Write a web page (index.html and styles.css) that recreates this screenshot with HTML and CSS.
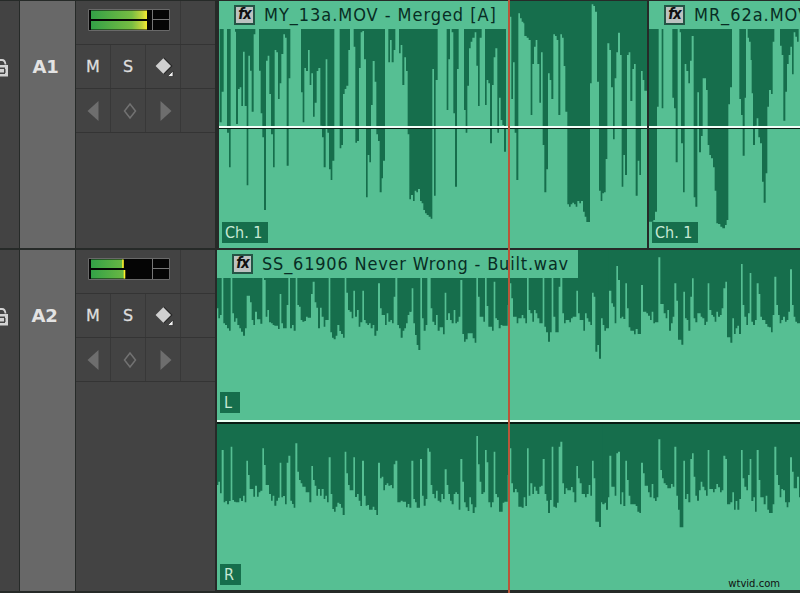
FILE: index.html
```
<!DOCTYPE html>
<html lang="en">
<head>
    <meta charset="UTF-8">
    <meta name="viewport" content="width=device-width, initial-scale=1.0">
    <title>Timeline - Audio Tracks</title>
    <link rel="stylesheet" href="styles.css">
</head>
<body>
    <!-- shared icons -->
    <svg class="symbols" width="0" height="0">
        <linearGradient id="level" gradientUnits="userSpaceOnUse" x1="2" y1="0" x2="60" y2="0">
            <stop offset="0" stop-color="#31a047"/>
            <stop offset="0.72" stop-color="#77bd42"/>
            <stop offset="0.9" stop-color="#c2d43c"/>
            <stop offset="1" stop-color="#fff12b"/>
        </linearGradient>
        <symbol id="lock" viewBox="0 0 9 20">
            <path d="M-1 2H2Q5 2 5.500 6.500" fill="none" stroke="#d2d2d2" stroke-width="1.8"/>
            <path d="M-3 7H8V18.500H-3Z" fill="#d2d2d2"/>
            <path d="M-1 9.500H5V11H-1ZM-1 14.500H5V16H-1ZM4 11H5.500V15H4Z" fill="#454545"/>
        </symbol>
        <symbol id="keyframe" viewBox="0 0 20 22">
            <path d="M10 1.500L18.500 10L10 18.500Z" fill="#252525"/>
            <path d="M9.300 2.300L17 10L9.300 17.700L1.600 10Z" fill="#d0d0d0"/>
            <path d="M19 15V20.500H13.500Z" fill="#eee" stroke="#282828" stroke-width="0.7"/>
        </symbol>
        <symbol id="prev" viewBox="0 0 12 20"><path d="M11.500 0V20L0.500 10Z" fill="#6e6e6e"/></symbol>
        <symbol id="next" viewBox="0 0 12 20"><path d="M0.500 0V20L11.500 10Z" fill="#6e6e6e"/></symbol>
        <symbol id="diamond" viewBox="0 0 14 18"><path d="M7 2L12.500 9L7 16L1.500 9Z" fill="none" stroke="#727272" stroke-width="1.5"/></symbol>
    </svg>

    <div class="timeline">
        <div class="track track-a1">
            <div class="lock"><svg width="9" height="20"><use href="#lock"/></svg></div>
            <div class="target">A1</div>
            <div class="controls">
                <div class="meter-row">
                    <div class="meter-cell">
                        <svg width="82" height="22" viewBox="0 0 82 22">
                            <path d="M0.500 0.500H81.500V21.500H0.500Z" fill="#050505" stroke="#696969"/>
                            <path d="M3 1.500H59V10H3ZM3 12H59V20.500H3Z" fill="url(#level)"/>
                            <path d="M64.500 1V21M64.500 10.500H81" stroke="#777" fill="none"/>
                        </svg>
                    </div>
                    <div class="cell"></div>
                </div>
                <div class="button-row">
                    <div class="cell letter">M</div>
                    <div class="cell letter">S</div>
                    <div class="cell shift-small"><svg width="20" height="22"><use href="#keyframe"/></svg></div>
                    <div class="cell"></div>
                </div>
                <div class="button-row">
                    <div class="cell"><svg width="12" height="20"><use href="#prev"/></svg></div>
                    <div class="cell shift-medium"><svg width="14" height="18"><use href="#diamond"/></svg></div>
                    <div class="cell shift-large"><svg width="12" height="20"><use href="#next"/></svg></div>
                    <div class="cell"></div>
                </div>
            </div>
            <div class="lane">
                <div class="clip clip-my">
                    <svg class="wave" viewBox="12 3 1284 741" preserveAspectRatio="none">
                        <path d="M14 87V367H20V275H26V87H36V398H42V502H47V87H60V95H63V372H69V267H74V262H79V318H84V155H89V318H95V556H100V167H105V212H110V335H116V103H121V87H132V212H137V340H142V412H147V630H153V182H158V167H163V282H168V403H174V502H179V150H184V157H189V297H194V250H199V162H205V103H210V113H215V497H221V235H226V87H258V277H263V367H268V204H273V213H279V150H284V255H289V220H294V350H299V308H305V213H310V204H316V377H321V412H326V502H332V178H337V398H342V508H347V540H352V482H358V87H374V445H379V435H384V282H389V267H394V257H400V150H405V87H416V140H421V428H426V423H432V204H437V97H442V93H447V178H453V592H458V465H463V487H468V315H473V183H479V245H484V403H489V423H494V577H500V535H504V482H510V87Z"/>
                        <path transform="translate(450)" d="M70 87V187H75V120H80V187H86V150H91V87H102V160H107V135H112V255H118V172H123V213H128V403H133V598H138V585H144V603H149V572H154V577H159V567H165V603H170V610H175V630H180V640H185V645H191V650H197V656H202V207H207V587H212V240H218V87H245V330H250V178H255V87H260V97H265V340H270V560H276V207H281V87H297V330H302V398H307V257H312V145H317V125H322V113H329V97H334V197H339V318H344V113H350V87H360V315H365V240H370V250H375V430H381V255H386V172H391V145H397V398H402V293H407V360H412V375H417V455H423V87Z"/>
                        <path transform="translate(870)" d="M12 3V50H19V297H24V187H29V398H34V540H40V40H45V55H50V65H55V70H58V108H65V113H71V120H77V345H82V192H87V140H92V120H97V192H103V308H108V157H113V435H118V577H124V508H129V220H134V240H139V297H145V103H150V108H155V120H160V345H166V103H171V113H176V198H181V335H187V613H192V620H197V613H202V608H207V613H212V620H217V603H223V610H228V603H234V635H239V650H244V666H255V250H260V13H265V18H270V35H276V245H282V572H287V603H292V580H297V577H302V477H307V130H313V150H318V262H324V418H329V235H334V157H339V98H345V165H350V560H355V465H360V525H366V165H371V157H376V303H382V207H387V192H392V587H398V482H403V525H408V213H413V240H418V272H426V3Z"/>
                    </svg>
                    <div class="clip-name"><span class="fx">fx</span><span class="name">MY_13a.MOV - Merged [A]</span></div>
                    <div class="channel">Ch. 1</div>
                    <div class="volume"></div>
                </div>
                <div class="clip clip-mr">
                    <svg class="wave" viewBox="12 3 453 741" preserveAspectRatio="none">
                        <path d="M12 87V665H25V660H30V635H36V320H41V87H50V325H55V87H82V293H87V325H92V487H98V87H104V97H108V430H114V577H119V192H124V213H130V250H135V182H140V108H146V592H151V620H157V277H162V457H168V408H173V235H183V270H188V435H193V465H198V475H204V502H209V572H214V670H219V672H226V680H232V685H240V675H245V660H250V313H255V262H261V87H283V297H288V345H293V467H299V293H303V87H308V113H312V125H317V180H320V280H324V435H330V377H335V355H340V412H345V430H351V545H356V608H362V520H367V320H372V270H378V282H383V125H388V87H405V137H410V165H415V362H421V275H426V192H431V165H436V140H441V223H446V97H451V110H456V125H461V87Z"/>
                    </svg>
                    <div class="clip-name"><span class="fx">fx</span><span class="name">MR_62a.MOV</span></div>
                    <div class="channel">Ch. 1</div>
                    <div class="volume"></div>
                </div>
            </div>
        </div>

        <div class="track track-a2">
            <div class="lock"><svg width="9" height="20"><use href="#lock"/></svg></div>
            <div class="target target-a2">A2</div>
            <div class="controls">
                <div class="meter-row">
                    <div class="meter-cell">
                        <svg width="82" height="22" viewBox="0 0 82 22">
                            <path d="M0.500 0.500H81.500V21.500H0.500Z" fill="#050505" stroke="#696969"/>
                            <path d="M3 1.500H35V10H3ZM3 12H37V20.500H3Z" fill="url(#level)"/>
                            <path d="M35 1.500V10M36.500 12V20.500" stroke="#fff12b" stroke-width="1.600"/>
                            <path d="M64.500 1V21M64.500 10.500H81" stroke="#777" fill="none"/>
                        </svg>
                    </div>
                    <div class="cell"></div>
                </div>
                <div class="button-row">
                    <div class="cell letter">M</div>
                    <div class="cell letter">S</div>
                    <div class="cell shift-small"><svg width="20" height="22"><use href="#keyframe"/></svg></div>
                    <div class="cell"></div>
                </div>
                <div class="button-row">
                    <div class="cell"><svg width="12" height="20"><use href="#prev"/></svg></div>
                    <div class="cell shift-medium"><svg width="14" height="18"><use href="#diamond"/></svg></div>
                    <div class="cell shift-large"><svg width="12" height="20"><use href="#next"/></svg></div>
                    <div class="cell"></div>
                </div>
            </div>
            <div class="lane lane-a2">
                <div class="half half-left">
                    <svg class="wave" viewBox="6 15 1749 510" preserveAspectRatio="none">
                        <path d="M5 98V190H10V220H15V210H20V98H25V235H30V240H36V250H42V257H47V98H52V205H57V230H62V220H67V240H73V250H78V260H84V272H90V250H95V152H105V172H110V225H115V240H120V200H126V223H136V236H142V98H147V105H152V215H157V195H162V232H168V235H173V240H178V242H189V252H194V147H199V235H204V250H215V180H220V98H225V250H231V240H236V257H242V98H247V180H252V185H257V225H262V230H268V228H273V215H278V218H288V147H293V110H299V172H304V188H309V250H315V188H320V215H326V245H331V225H341V98H346V262H351V278H356V283H362V272H367V240H373V258H378V267H384V278H389V98H394V143H399V195H404V200H410V220H415V137H420V215H426V195H431V245H436V232H442V137H447V225H452V235H457V240H462V235H467V250H473V240H478V272H484V257H489V115H495V190H500V210H510V240H515V205H520V230H526V225H531V235H536V155H541V98H547V240H552V250H557V278H563V257H568V250H573V235H578V210H583V200H588V98Z"/>
                        <path transform="translate(585)" d="M0 98V200H5V130H10V235H15V270H20V300H25V315H31V98H36V220H41V257H47V240H52V98H62V190H67V230H73V240H78V210H83V257H89V247H99V268H104V143H109V225H114V205H120V225H125V235H131V195H136V235H141V230H146V215H151V105H157V267H162V290H167V283H173V265H188V280H194V293H199V98H204V155H209V215H220V230H225V98H230V183H235V245H246V257H251V110H256V220H261V225H266V250H272V240H277V242H293V180H299V115H304V160H309V215H320V235H325V220H335V210H340V220H346V235H351V98H356V195H361V205H367V230H372V195H377V205H382V220H388V235H398V98H403V245H408V262H414V290H420V262H425V98H430V215H436V262H446V125H451V98H457V205H462V235H467V225H478V232H483V220H488V215H499V137H504V205H509V225H520V257H525V205H530V220H535V230H541V240H546V143H551V155H556V320H562V300H567V341H573V220H578V240H583V257H588V250H597V15H502V98Z"/>
                        <path transform="translate(1155)" d="M26 15V137H34V175H39V185H44V235H49V63H54V105H60V220H65V215H70V222H76V115H81V190H86V247H91V257H102V268H107V252H113V267H123V120H129V200H139V205H144V212H150V225H155V200H160V235H165V232H175V37H181V177H191V205H197V220H202V195H207V257H213V235H218V215H223V115H229V167H234V284H244V299H250V140H255V220H260V225H265V257H271V155H276V100H281V220H286V232H292V205H302V215H307V220H313V240H318V230H323V115H328V195H334V210H339V215H344V230H349V200H354V215H360V210H365V190H370V130H376V110H381V277H391V293H397V220H402V267H407V250H412V242H417V267H423V57H428V180H433V215H439V240H444V205H449V84H454V230H459V240H465V225H470V115H476V147H481V215H486V225H496V237H502V245H507V247H513V262H518V210H523V95H529V180H534V210H539V235H544V225H549V215H555V230H560V225H565V200H570V73H576V180H581V215H586V230H591V235H602V15Z"/>
                    </svg>
                    <div class="clip-name"><span class="fx">fx</span><span class="name">SS_61906 Never Wrong - Built.wav</span></div>
                    <div class="channel channel-left">L</div>
                </div>
                <div class="half half-right">
                    <svg class="wave" viewBox="6 27 1749 498" preserveAspectRatio="none">
                        <path d="M5 27V210H10V200H15V235H20V105H26V262H31V258H36V268H42V258H47V95H52V255H57V260H62V262H73V250H78V258H84V242H89V262H94V137H99V180H104V222H115V245H120V212H126V245H131V232H136V227H142V100H147V150H152V210H162V237H168V257H173V242H178V272H184V257H189V248H194V143H199V247H204V243H210V268H215V143H220V122H226V257H231V267H236V278H241V85H247V170H252V195H257V205H262V215H272V232H283V262H289V153H294V195H299V212H304V242H309V222H315V242H320V222H326V252H331V242H336V262H341V127H347V237H352V282H357V290H362V275H367V263H373V267H378V278H383V300H389V110H394V175H399V210H404V226H415V127H420V246H426V237H431V257H436V273H441V137H447V242H452V272H457V270H462V284H473V275H478V285H484V300H489V143H495V190H500V185H505V226H510V210H515V205H520V212H526V210H531V220H536V148H541V137H547V262H557V257H563V260H573V277H578V267H583V278H589V27Z"/>
                        <path transform="translate(585)" d="M3 27V137H10V252H15V262H20V278H30V132H36V242H41V272H47V252H52V100H57V110H62V210H67V237H73V250H78V227H83V257H89V262H94V237H99V252H104V163H110V210H115V237H120V257H125V268H131V237H136V232H141V237H146V284H151V132H157V200H162V262H167V277H173V288H178V247H183V268H188V294H194V277H199V63H204V148H209V200H214V237H220V232H225V105H230V142H235V262H241V277H246V262H251V110H256V237H261V247H267V290H278V263H283V260H293V180H299V100H304V205H309V232H315V222H320V232H325V275H335V278H341V247H346V273H351V100H356V242H361V205H367V237H372V215H377V227H382V237H388V215H393V212H398V132H404V237H409V257H414V294H420V255H425V95H430V275H436V278H441V263H446V95H451V80H457V205H462V237H467V220H472V226H483V216H488V232H493V262H499V153H504V190H509V205H515V237H525V247H530V237H536V210H541V242H546V137H551V190H556V320H567V336H573V262H578V268H583V263H588V283H593V27Z"/>
                        <path transform="translate(1155)" d="M22 27V247H28V122H34V215H44V242H49V115H54V110H60V268H65V232H70V273H76V137H81V195H86V242H91V268H107V273H112V290H118V294H123V143H129V175H134V212H144V232H149V247H155V207H160V250H165V258H170V247H175V73H181V165H186V190H191V205H197V210H202V220H213V207H218V215H223V95H229V242H234V284H239V337H250V137H255V252H260V237H265V262H271V132H276V115H281V185H286V242H291V257H297V226H302V200H307V215H313V226H318V242H323V105H328V222H339V232H344V222H349V207H354V217H360V232H365V226H370V122H376V132H381V268H391V262H397V232H402V284H407V258H412V284H418V252H423V105H428V190H433V215H439V226H444V180H449V132H454V258H460V247H465V290H470V105H476V195H481V247H491V268H497V242H502V284H507V294H518V268H523V95H529V180H534V210H539V247H544V222H549V226H555V262H560V277H565V262H570V127H576V170H581V220H591V185H597V247H602V27Z"/>
                        <path transform="translate(1155)" d="M7 27V267H13V262H18V284H24V27Z"/>
                    </svg>
                    <div class="channel channel-right">R</div>
                </div>
            </div>
        </div>
        <div class="playhead"></div>
        <div class="watermark">wtvid.com</div>
    </div>
</body>
</html>
```
FILE: styles.css
```
body {
    margin: 0;
    background-color: #262a28;
    font-family: "DejaVu Sans Condensed", "DejaVu Sans", sans-serif;
    overflow: hidden;
}
.symbols {
    display: block;
}
.timeline {
    position: relative;
    width: 800px;
    height: 593px;
    overflow: hidden;
}
.track {
    display: grid;
    grid-template-columns: 19px 55px 139px 584px;
    column-gap: 1px;
}
.track-a1 {
    height: 247px;
    padding-top: 1px;
}
.track-a2 {
    height: 341px;
    margin-top: 2px;
}
.lock,
.controls {
    background-color: #434343;
}
.lock svg {
    display: block;
    margin-top: 57px;
}
.target {
    background-color: #686868;
    color: #e3e3e3;
    font-family: "DejaVu Sans", sans-serif;
    font-size: 18px;
    font-weight: bold;
    line-height: 20px;
    letter-spacing: -0.3px;
    text-align: center;
    padding-top: 56px;
    padding-right: 4px;
}
.target-a2 {
    padding-right: 6px;
}
.meter-row {
    display: flex;
    height: 43px;
    border-bottom: 1px solid #343434;
}
.meter-cell {
    width: 92px;
    padding: 8px 0 0 12px;
    border-right: 1px solid #383838;
}
.meter-cell svg {
    display: block;
}
.button-row {
    display: grid;
    grid-template-columns: 35px 35px 35px 34px;
    height: 43px;
    border-bottom: 1px solid #343434;
}
.cell {
    display: flex;
    align-items: center;
    justify-content: center;
    border-right: 1px solid #383838;
}
.cell:last-child {
    border-right: none;
}
.shift-small {
    padding-left: 2px;
}
.shift-medium {
    padding-left: 4px;
}
.shift-large {
    padding-left: 6px;
}
.letter {
    color: #dedede;
    font-family: "DejaVu Sans", sans-serif;
    font-size: 16px;
    -webkit-text-stroke: 0.3px #dedede;
}
.lane {
    display: flex;
    gap: 2px;
    padding-left: 3px;
    overflow: hidden;
}
.lane-a2 {
    display: block;
    padding-left: 1px;
}
.clip,
.half {
    display: grid;
    grid-template-columns: 100%;
    grid-template-rows: 100%;
    background-color: #56bf93;
    overflow: hidden;
}
.clip > *,
.half > * {
    grid-area: 1 / 1;
}
.clip {
    height: 247px;
}
.clip-my {
    width: 428px;
}
.clip-mr {
    width: 151px;
}
.half-left {
    height: 170px;
    border-bottom: 2px solid #e9fff2;
}
.half-right {
    height: 166px;
    border-top: 2px solid #071b12;
}
.wave {
    display: block;
    width: 100%;
    height: 100%;
    fill: #166e4c;
}
.clip-name {
    box-sizing: border-box;
    align-self: start;
    display: flex;
    align-items: center;
    height: 28px;
    padding-left: 15px;
    padding-bottom: 1px;
    background-color: #56bf93;
    color: #082d24;
    font-size: 18px;
    letter-spacing: 0.95px;
    white-space: nowrap;
}
.clip-my .clip-name {
    width: 290px;
}
.half .clip-name {
    width: 361px;
    letter-spacing: 0.8px;
}
.fx {
    box-sizing: border-box;
    flex: none;
    width: 21px;
    height: 20px;
    margin-right: 9px;
    border: 2px solid #245445;
    background-color: #bcc2c0;
    color: #111;
    font-size: 15px;
    font-style: italic;
    font-weight: bold;
    letter-spacing: -1px;
    line-height: 14px;
    text-align: center;
}
.channel {
    justify-self: start;
    align-self: end;
    box-sizing: border-box;
    width: 46px;
    height: 21px;
    margin-left: 3px;
    margin-bottom: 5px;
    padding-left: 3px;
    background-color: #166e4c;
    color: #c7e9d3;
    font-size: 16px;
    line-height: 22px;
    white-space: nowrap;
}
.channel-left {
    width: 20px;
    margin-bottom: 7px;
    padding-left: 4px;
}
.channel-right {
    width: 21px;
    padding-left: 4px;
}
.volume {
    align-self: start;
    height: 2px;
    margin-top: 125px;
    background-color: #f2fff8;
    border-bottom: 1px solid #071b12;
}
.playhead {
    position: absolute;
    top: 0;
    left: 508px;
    width: 2px;
    height: 593px;
    background-color: #b9563a;
}
.watermark {
    position: absolute;
    right: 20px;
    bottom: 2px;
    color: #101010;
    font-family: "DejaVu Sans", sans-serif;
    font-size: 10px;
    line-height: 14px;
}
```
